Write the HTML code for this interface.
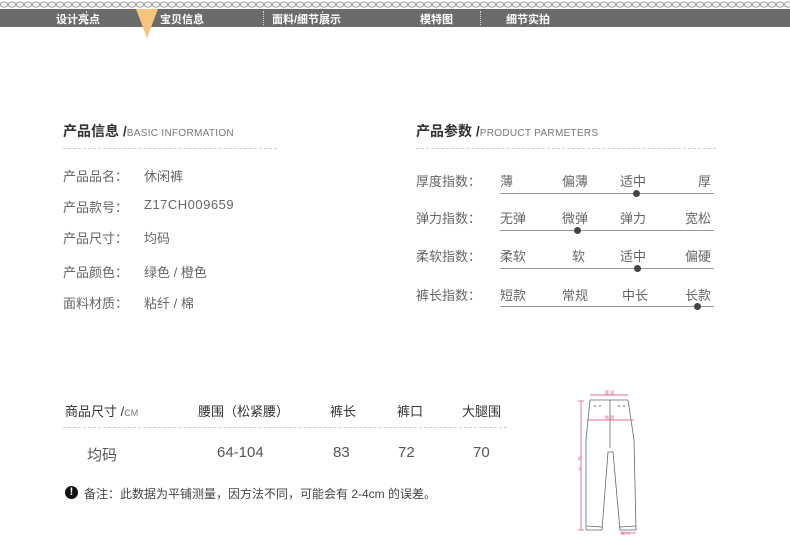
<!DOCTYPE html>
<html><head><meta charset="utf-8"><style>
body{margin:0;width:790px;height:545px;background:#fff;position:relative;overflow:hidden;font-family:"Liberation Sans","Noto Sans CJK SC",sans-serif;color:#555}
.a{position:absolute;white-space:nowrap}
.nav{position:absolute;left:0;top:9px;width:790px;height:18px;background:#6b6b6b}
.nav span{position:absolute;top:2px;color:#fff;font-size:11px;font-weight:bold}
.sep{position:absolute;top:2px;height:14px;border-left:1px dotted #ddd}
.t{font-size:14px;font-weight:bold;color:#333}
.t small{font-size:10px;font-weight:normal;color:#777;letter-spacing:.3px}
.dash{position:absolute;border-top:1px dashed #ccc}
.r{font-size:13px;color:#666}
.line{position:absolute;height:1px;background:#999}
.dot{position:absolute;width:7px;height:7px;border-radius:50%;background:#444}
</style></head><body>
<svg class="a" style="left:0;top:0" width="790" height="9"><defs><pattern id="c" width="8" height="9" patternUnits="userSpaceOnUse"><ellipse cx="4" cy="4.5" rx="3.6" ry="2.6" fill="none" stroke="#999" stroke-width="1"/></pattern></defs><rect width="790" height="9" fill="url(#c)"/></svg>
<div class="nav">
<span style="left:56px">设计亮点</span>
<span style="left:160px">宝贝信息</span>
<span style="left:272px">面料/细节展示</span>
<span style="left:420px">模特图</span>
<span style="left:506px">细节实拍</span>
<div class="sep" style="left:86px"></div><div class="sep" style="left:145px"></div><div class="sep" style="left:263px"></div><div class="sep" style="left:322px"></div><div class="sep" style="left:480px"></div>
</div>
<svg class="a" style="left:136px;top:9px" width="22" height="29"><polygon points="0,0 22,0 11,29" fill="#f6c57c"/></svg>

<div class="a t" style="left:63px;top:121px">产品信息 /<small>BASIC INFORMATION</small></div>
<div class="dash" style="left:63px;top:148px;width:214px"></div>
<div class="a r" style="left:63px;top:166px">产品品名：</div><div class="a r" style="left:144px;top:166px">休闲裤</div>
<div class="a r" style="left:63px;top:197px">产品款号：</div><div class="a r" style="left:144px;top:197px;letter-spacing:.5px">Z17CH009659</div>
<div class="a r" style="left:63px;top:228px">产品尺寸：</div><div class="a r" style="left:144px;top:228px">均码</div>
<div class="a r" style="left:63px;top:262px">产品颜色：</div><div class="a r" style="left:144px;top:262px">绿色 / 橙色</div>
<div class="a r" style="left:63px;top:293px">面料材质：</div><div class="a r" style="left:144px;top:293px">粘纤 / 棉</div>

<div class="a t" style="left:416px;top:121px">产品参数 /<small>PRODUCT PARMETERS</small></div>
<div class="dash" style="left:416px;top:148px;width:300px"></div>

<div class="a r" style="left:416px;top:171px">厚度指数：</div>
<div class="a r" style="left:500px;top:171px">薄</div><div class="a r" style="left:562px;top:171px">偏薄</div><div class="a r" style="left:620px;top:171px">适中</div><div class="a r" style="left:698px;top:171px">厚</div>
<div class="line" style="left:500px;top:193px;width:214px"></div><div class="dot" style="left:633px;top:190px"></div>

<div class="a r" style="left:416px;top:208px">弹力指数：</div>
<div class="a r" style="left:500px;top:208px">无弹</div><div class="a r" style="left:562px;top:208px">微弹</div><div class="a r" style="left:620px;top:208px">弹力</div><div class="a r" style="left:685px;top:208px">宽松</div>
<div class="line" style="left:500px;top:230px;width:214px"></div><div class="dot" style="left:574px;top:227px"></div>

<div class="a r" style="left:416px;top:246px">柔软指数：</div>
<div class="a r" style="left:500px;top:246px">柔软</div><div class="a r" style="left:572px;top:246px">软</div><div class="a r" style="left:620px;top:246px">适中</div><div class="a r" style="left:685px;top:246px">偏硬</div>
<div class="line" style="left:500px;top:268px;width:214px"></div><div class="dot" style="left:634px;top:265px"></div>

<div class="a r" style="left:416px;top:285px">裤长指数：</div>
<div class="a r" style="left:500px;top:285px">短款</div><div class="a r" style="left:562px;top:285px">常规</div><div class="a r" style="left:622px;top:285px">中长</div><div class="a r" style="left:685px;top:285px">长款</div>
<div class="line" style="left:500px;top:306px;width:214px"></div><div class="dot" style="left:694px;top:303px"></div>

<div class="a" style="left:65px;top:401px;font-size:13px;color:#333">商品尺寸 /<span style="font-size:9px;color:#777">CM</span></div>
<div class="a" style="left:198px;top:401px;font-size:13px;color:#333">腰围（松紧腰）</div>
<div class="a" style="left:330px;top:401px;font-size:13px;color:#333">裤长</div>
<div class="a" style="left:397px;top:401px;font-size:13px;color:#333">裤口</div>
<div class="a" style="left:462px;top:401px;font-size:13px;color:#333">大腿围</div>
<div class="dash" style="left:63px;top:427px;width:444px"></div>
<div class="a" style="left:87px;top:444px;font-size:15px;color:#555">均码</div>
<div class="a" style="left:217px;top:444px;font-size:15px;color:#555">64-104</div>
<div class="a" style="left:333px;top:444px;font-size:15px;color:#555">83</div>
<div class="a" style="left:398px;top:444px;font-size:15px;color:#555">72</div>
<div class="a" style="left:473px;top:444px;font-size:15px;color:#555">70</div>
<div class="a" style="left:65px;top:486px;width:13px;height:13px;border-radius:50%;background:#111;color:#fff;font-size:11px;font-weight:bold;text-align:center;line-height:13px">!</div>
<div class="a" style="left:84px;top:485px;font-size:12px;color:#444">备注：此数据为平铺测量，因方法不同，可能会有 2-4cm 的误差。</div>

<svg class="a" style="left:578px;top:390px" width="66" height="145" viewBox="0 0 66 145">
<g fill="none" stroke="#666" stroke-width="0.8">
<path d="M12 10 L50 10 L56 50 L58 140 L42 140 L35 62 L30 62 L24 140 L8 140 L8 50 Z"/>
<line x1="32" y1="10" x2="32" y2="58"/>
<path d="M9 136 L24 137 M41 137 L58 136"/>
</g>
<g fill="#999"><circle cx="17" cy="16" r="1"/><circle cx="22" cy="16" r="1"/><circle cx="41" cy="16" r="1"/><circle cx="46" cy="16" r="1"/></g>
<g stroke="#e0708a" stroke-width="0.9" fill="none">
<line x1="12" y1="5" x2="50" y2="5"/><line x1="9" y1="30" x2="56" y2="30"/>
<line x1="3" y1="11" x2="3" y2="140"/><line x1="0" y1="11" x2="6" y2="11"/><line x1="0" y1="140" x2="6" y2="140"/>
<line x1="42" y1="143" x2="58" y2="143"/>
</g>
<g fill="#e0708a" font-size="4"><text x="27" y="4">腰 围</text><text x="27" y="29">臀 围</text><text x="0" y="70">裤</text><text x="0" y="80">长</text><text x="43" y="145">脚 口</text></g>
</svg>
</body></html>
